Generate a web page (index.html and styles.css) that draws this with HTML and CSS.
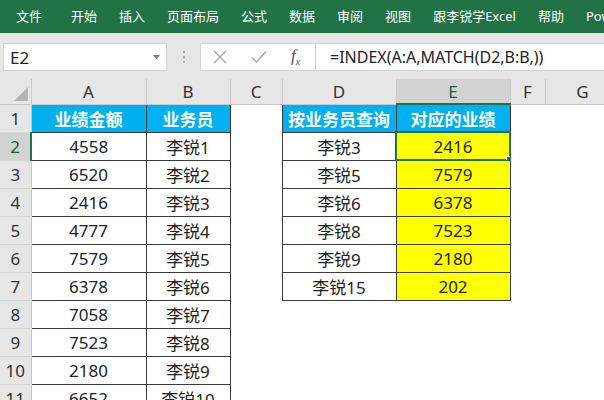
FILE: index.html
```html
<!DOCTYPE html>
<html lang="zh-CN">
<head>
  <meta charset="UTF-8" />
  <title>跟李锐学Excel - INDEX MATCH</title>
  <link rel="stylesheet" href="styles.css">
</head>
<body>
  <div class="ribbon">
    <span class="tab first">文件</span>
    <span class="tab">开始</span>
    <span class="tab">插入</span>
    <span class="tab">页面布局</span>
    <span class="tab">公式</span>
    <span class="tab">数据</span>
    <span class="tab">审阅</span>
    <span class="tab">视图</span>
    <span class="tab">跟李锐学Excel</span>
    <span class="tab">帮助</span>
    <span class="tab">Power Pivot</span>
  </div>

  <div class="formula-bar">
    <div class="name-box">
      <span>E2</span>
      <svg class="drop" width="7" height="4" viewBox="0 0 7 4"><path d="M0 0h7L3.5 4z" fill="#777"/></svg>
    </div>
    <div class="grip"><i></i><i></i><i></i></div>
    <div class="formula-box">
      <div class="fx-buttons">
        <svg width="14" height="14" viewBox="0 0 14 14"><path d="M1 1l12 12M13 1L1 13" stroke="#a6a6a6" stroke-width="1.3" fill="none"/></svg>
        <svg width="16" height="14" viewBox="0 0 16 14"><path d="M1 7.5l4.5 4.5L15 1.5" stroke="#a6a6a6" stroke-width="1.3" fill="none"/></svg>
        <span class="fx">f<sub>x</sub></span>
      </div>
      <div class="formula">=INDEX(A:A,MATCH(D2,B:B,))</div>
    </div>
  </div>

  <div class="sheet">
    <table>
      <colgroup>
        <col style="width:31px">
        <col style="width:115px">
        <col style="width:84px">
        <col style="width:52px">
        <col style="width:114px">
        <col style="width:114px">
        <col style="width:35px">
        <col style="width:75px">
      </colgroup>
      <tr class="col-head">
        <th class="corner"><span class="tri"></span></th>
        <th>A</th><th>B</th><th>C</th><th>D</th><th class="active">E</th><th>F</th><th>G</th>
      </tr>
      <tr>
        <th class="row-head">1</th>
        <td class="b title">业绩金额</td><td class="b title">业务员</td><td></td>
        <td class="b title">按业务员查询</td><td class="b title">对应的业绩</td><td></td><td></td>
      </tr>
      <tr>
        <th class="row-head active">2</th>
        <td class="b">4558</td><td class="b">李锐1</td><td></td>
        <td class="b">李锐3</td><td class="b hl selected">2416</td><td></td><td></td>
      </tr>
      <tr>
        <th class="row-head">3</th>
        <td class="b">6520</td><td class="b">李锐2</td><td></td>
        <td class="b">李锐5</td><td class="b hl">7579</td><td></td><td></td>
      </tr>
      <tr>
        <th class="row-head">4</th>
        <td class="b">2416</td><td class="b">李锐3</td><td></td>
        <td class="b">李锐6</td><td class="b hl">6378</td><td></td><td></td>
      </tr>
      <tr>
        <th class="row-head">5</th>
        <td class="b">4777</td><td class="b">李锐4</td><td></td>
        <td class="b">李锐8</td><td class="b hl">7523</td><td></td><td></td>
      </tr>
      <tr>
        <th class="row-head">6</th>
        <td class="b">7579</td><td class="b">李锐5</td><td></td>
        <td class="b">李锐9</td><td class="b hl">2180</td><td></td><td></td>
      </tr>
      <tr>
        <th class="row-head">7</th>
        <td class="b">6378</td><td class="b">李锐6</td><td></td>
        <td class="b">李锐15</td><td class="b hl">202</td><td></td><td></td>
      </tr>
      <tr>
        <th class="row-head">8</th>
        <td class="b">7058</td><td class="b">李锐7</td><td></td><td></td><td></td><td></td><td></td>
      </tr>
      <tr>
        <th class="row-head">9</th>
        <td class="b">7523</td><td class="b">李锐8</td><td></td><td></td><td></td><td></td><td></td>
      </tr>
      <tr>
        <th class="row-head">10</th>
        <td class="b">2180</td><td class="b">李锐9</td><td></td><td></td><td></td><td></td><td></td>
      </tr>
      <tr>
        <th class="row-head">11</th>
        <td class="b">6652</td><td class="b">李锐10</td><td></td><td></td><td></td><td></td><td></td>
      </tr>
    </table>
  </div>
</body>
</html>
```

FILE: styles.css
```css
body {
  margin: 0;
  width: 604px;
  height: 400px;
  overflow: hidden;
  font-family: "Noto Sans", "Noto Sans CJK SC", sans-serif;
  background: #fff;
  color: #222;
}
.ribbon {
  display: flex;
  align-items: center;
  height: 33px;
  padding-left: 5px;
  background: #217346;
  white-space: nowrap;
}
.tab {
  padding: 0 11px;
  color: #fff;
  font-size: 13px;
  line-height: 13px;
}
.tab.first {
  margin-right: 7px;
}
.formula-bar {
  display: flex;
  align-items: center;
  height: 46px;
  padding: 2px 0 0 3px;
  box-sizing: border-box;
  background: #e6e6e6;
}
.name-box {
  display: flex;
  align-items: center;
  justify-content: space-between;
  box-sizing: border-box;
  width: 164px;
  height: 28px;
  padding: 0 6px 0 6px;
  background: #fff;
  border: 1px solid #d4d4d4;
  font-size: 17px;
}
.grip {
  display: flex;
  flex-direction: column;
  gap: 3px;
  width: 33px;
  align-items: center;
}
.grip i {
  display: block;
  width: 2px;
  height: 2px;
  background: #a8a8a8;
}
.formula-box {
  flex: 1;
  display: flex;
  align-items: center;
  box-sizing: border-box;
  height: 28px;
  background: #fff;
  border: 1px solid #d4d4d4;
  border-right: none;
}
.fx-buttons {
  display: flex;
  align-items: center;
  gap: 24px;
  height: 100%;
  padding: 0 0 0 12px;
  width: 115px;
  box-sizing: border-box;
  border-right: 1px solid #d4d4d4;
}
.fx {
  font-family: "Liberation Serif", serif;
  font-style: italic;
  font-size: 17px;
  color: #555;
}
.fx sub {
  font-size: 10px;
}
.formula {
  padding-left: 14px;
  font-size: 16px;
  color: #222;
}
table {
  border-collapse: collapse;
  table-layout: fixed;
  width: 620px;
}
td, th {
  padding: 0;
  text-align: center;
  font-weight: normal;
  font-size: 17px;
  white-space: nowrap;
  overflow: hidden;
}
tr {
  height: 28px;
}
.col-head {
  height: 25px;
}
.col-head th {
  background: #e6e6e6;
  color: #333;
  border-right: 1px solid #c8c8c8;
  border-bottom: 1px solid #c8c8c8;
}
.col-head th.active {
  background: #d2d2d2;
  color: #1f5b3a;
  border-bottom: 2px solid #217346;
}
.corner {
  position: relative;
}
.tri {
  position: absolute;
  right: 3px;
  bottom: 3px;
  width: 0;
  height: 0;
  border-left: 14px solid transparent;
  border-bottom: 14px solid #b4b4b4;
}
.row-head {
  background: #e6e6e6;
  color: #333;
  border-right: 1px solid #c8c8c8;
  border-bottom: 1px solid #d6d6d6;
}
.row-head.active {
  background: #d2d2d2;
  color: #1f5b3a;
  border-right: 2px solid #217346;
}
td.b {
  border: 1px solid #3c3c3c;
}
td.title {
  background: #00b0f0;
  color: #fff;
  font-weight: bold;
}
td.hl {
  background: #ffff00;
}
td.selected {
  position: relative;
  outline: 2px solid #217346;
  outline-offset: -1px;
}
td.selected::after {
  content: "";
  position: absolute;
  right: -3px;
  bottom: -3px;
  width: 5px;
  height: 5px;
  background: #217346;
  border: 1px solid #fff;
}
```
